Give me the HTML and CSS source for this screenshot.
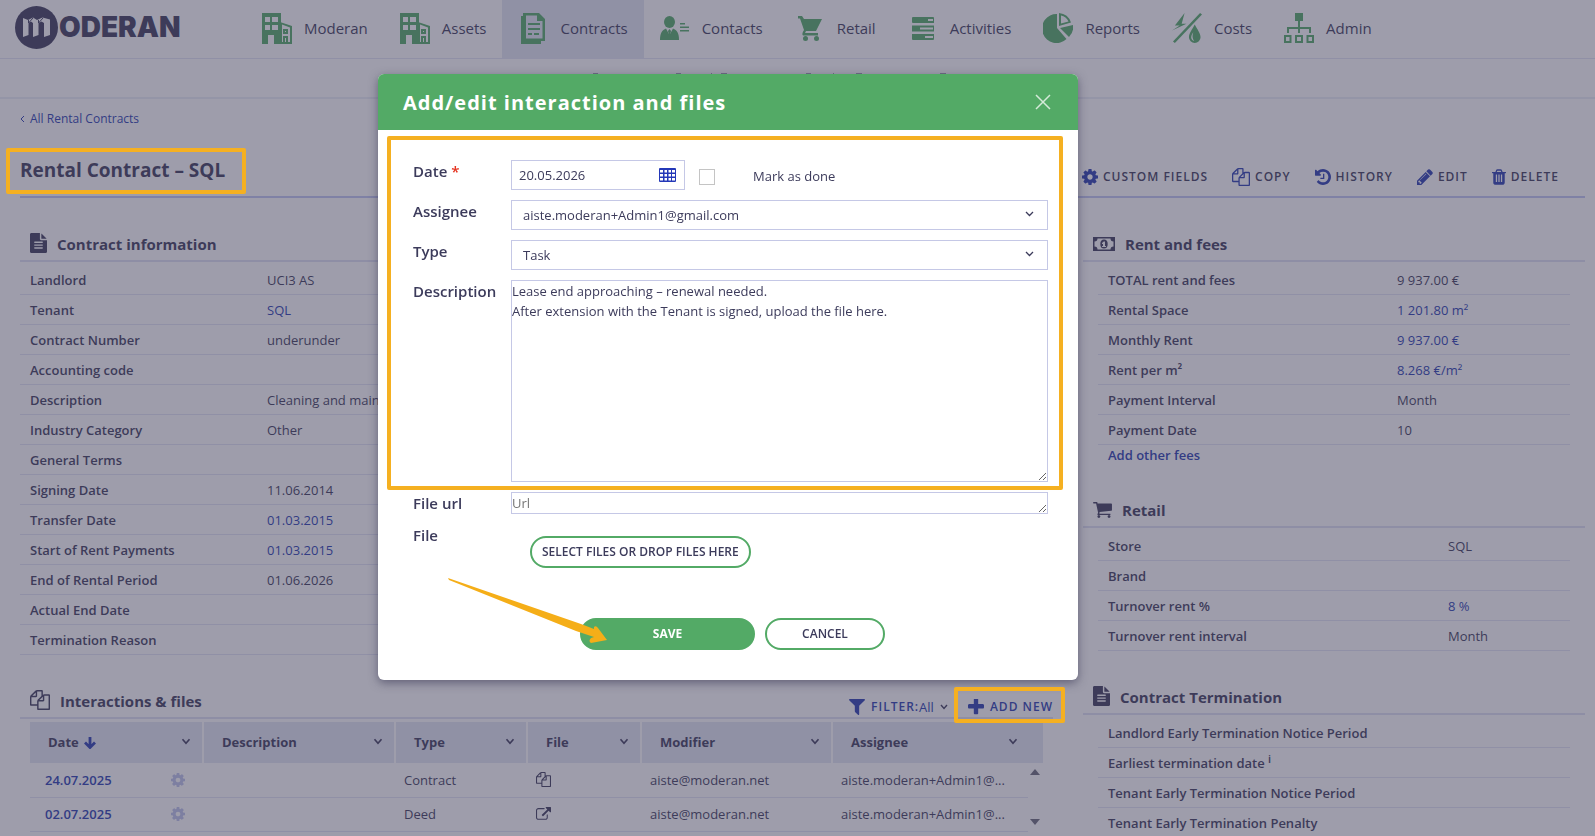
FILE: index.html
```html
<!DOCTYPE html>
<html lang="en">
<head>
<meta charset="utf-8">
<title>Rental Contract – SQL</title>
<link rel="stylesheet" href="styles.css">
</head>
<body>
<svg class="defs" aria-hidden="true">
  <symbol id="i-building" viewBox="0 0 30 31"><path fill-rule="evenodd" d="M0 0H19V31H12V22H6V31H0ZM3 4V9H8V4ZM10 4V9H16V4ZM3 12V17H8V12ZM10 12V17H16V12Z"/><path fill-rule="evenodd" d="M18 9L30 13V31H18ZM20 11.500V29H28V14.500Z"/><path fill-rule="evenodd" d="M21 16h5v5h-5zM23 18v1h1v-1zM21 23h5v6h-5zM23 25v4h1v-4z"/></symbol>
  <symbol id="i-doc" viewBox="0 0 24 31"><path d="M0 3H2V29H19V31H0Z"/><path fill-rule="evenodd" d="M2 0H18L24 6V28H2ZM5 2.500V25.500H21.500V8H16V2.500Z"/><path d="M7 10H19V12H7ZM7 15H19V17H7ZM7 20H11V22H7ZM13 20H18V22H13ZM0 27H20V31H0Z"/></symbol>
  <symbol id="i-contact" viewBox="0 0 30 24"><ellipse cx="9.500" cy="6" rx="5.500" ry="6"/><path d="M0 24C0 17 2 14 6 12.500L9.500 19L13 12.500C17 14 19 17 19 24Z"/><path d="M9.500 13l1.500 2-1 4h-1l-1-4zM20 7h5v1.500h-5zM20 10.500h9v1.500h-9zM20 14h9v1.500h-9z"/></symbol>
  <symbol id="i-cart" viewBox="0 0 24 25"><path d="M0 0H4L6 3H24L18 15H8L7 17H20V19.500H5C4 19 4 17 6 14L2 2.500H0Z"/><circle cx="7.500" cy="22.500" r="2.500"/><circle cx="18.500" cy="22.500" r="2.500"/></symbol>
  <symbol id="i-bars" viewBox="0 0 22 23"><path fill-rule="evenodd" d="M1 0H21Q22 0 22 1V6H1Q0 6 0 5V1Q0 0 1 0ZM16 2V4H21V2ZM0 8.500H22V14.500H0ZM8 10.500V12.500H21V10.500ZM0 17H22V22Q22 23 21 23H1Q0 23 0 22ZM13 19V21H21V19Z"/></symbol>
  <symbol id="i-pie" viewBox="0 0 30 30"><path d="M14 1V15L23.500 26A14.500 14.500 0 1 1 14 1Z"/><path fill-rule="evenodd" d="M16 0A14 14 0 0 1 28 9.500L16 13ZM18 2.500V10.500L25.500 8.500A11 11 0 0 0 18 2.500Z"/><path d="M17 15L30 12A14 14 0 0 1 26 24Z"/></symbol>
  <symbol id="i-costs" viewBox="0 0 31 31"><path d="M13 0L3 13H8L0 18L15 11H10Z"/><path d="M29 0L31 1.500L3 31L1 29.500Z"/><path fill-rule="evenodd" d="M23.500 12C26 17 29.500 21 29.500 25A6 6 0 0 1 17.500 25C17.500 21 21 17 23.500 12ZM22 20C19 24 19 28 23 29Q20 26 22 20Z"/></symbol>
  <symbol id="i-org" viewBox="0 0 30 30"><path fill-rule="evenodd" d="M11 0h8v8h-8zM14 8h2v6h11v6h-2v-4h-9v4h-2v-4H5v4H3v-6h11zM0 22h7.500v8H0zM2 24v4h3.500v-4zM11 22h8v8h-8zM13 24v4h4v-4zM22.500 22H30v8h-7.500zM24.500 24v4H28v-4z"/></symbol>
  <symbol id="i-plus" viewBox="192 192 1408 1408"><path d="M1600 736v192q0 40-28 68t-68 28h-416v416q0 40-28 68t-68 28h-192q-40 0-68-28t-28-68v-416h-416q-40 0-68-28t-28-68v-192q0-40 28-68t68-28h416v-416q0-40 28-68t68-28h192q40 0 68 28t28 68v416h416q40 0 68 28t28 68z"/></symbol>
  <symbol id="i-filter" viewBox="192 256 1408 1408"><path d="M1595 295q17 41-14 70l-493 493v742q0 42-39 59-13 5-25 5-27 0-45-19l-256-256q-19-19-19-45v-486l-493-493q-31-29-14-70 17-39 59-39h1280q42 0 59 39z"/></symbol>
  <symbol id="i-cog" viewBox="128 128 1536 1536"><path d="M1152 896q0-106-75-181t-181-75-181 75-75 181 75 181 181 75 181-75 75-181zm512-109v222q0 12-8 23t-20 13l-185 28q-19 54-39 91 35 50 107 138 10 12 10 25t-9 23q-27 37-99 108t-94 71q-12 0-26-9l-138-108q-44 23-91 38-16 136-29 186-7 28-36 28h-222q-14 0-24.500-8.500t-11.500-21.500l-28-184q-49-16-90-37l-141 107q-10 9-25 9-14 0-25-11-126-114-165-168-7-10-7-23 0-12 8-23 15-21 51-66.500t54-70.500q-27-50-41-99l-183-27q-13-2-21-12.500t-8-23.500v-222q0-12 8-23t19-13l186-28q14-46 39-92-40-57-107-138-10-12-10-24 0-10 9-23 26-36 98.500-107.500t94.500-71.500q13 0 26 10l138 107q44-23 91-38 16-136 29-186 7-28 36-28h222q14 0 24.500 8.500t11.500 21.500l28 184q49 16 90 37l142-107q9-9 24-9 13 0 25 10 129 119 165 170 7 8 7 22 0 12-8 23-15 21-51 66.500t-54 70.500q26 50 41 98l183 28q13 2 21 12.500t8 23.500z"/></symbol>
  <symbol id="i-pencil" viewBox="128 128 1536 1536"><path d="M491 1536l91-91-235-235-91 91v107h128v128h107zm523-928q0-22-22-22-10 0-17 7l-542 542q-7 7-7 17 0 22 22 22 10 0 17-7l542-542q7-7 7-17zm-54-192l416 416-832 832h-416v-416zm683 96q0 53-37 90l-166 166-416-416 166-165q36-38 90-38 53 0 91 38l235 234q37 39 37 91z"/></symbol>
  <symbol id="i-history" viewBox="128 128 1536 1536"><path d="M1664 896q0 156-61 298t-164 245-245 164-298 61q-172 0-327-72.500t-264-204.500q-7-10-6.500-22.500t8.500-20.500l137-138q10-9 25-9 16 2 23 12 73 95 179 147t225 52q104 0 198.500-40.500t163.500-109.500 109.500-163.500 40.500-198.500-40.500-198.500-109.500-163.500-163.500-109.500-198.500-40.500q-98 0-188 35.500t-160 101.500l137 138q31 30 14 69-17 40-59 40h-448q-26 0-45-19t-19-45v-448q0-42 40-59 39-17 69 14l130 129q107-101 244.500-156.500t284.500-55.500q156 0 298 61t245 164 164 245 61 298zm-640-288v448q0 14-9 23t-23 9h-320q-14 0-23-9t-9-23v-64q0-14 9-23t23-9h224v-352q0-14 9-23t23-9h64q14 0 23 9t9 23z"/></symbol>
  <symbol id="i-trash" viewBox="192 128 1408 1536"><path d="M704 1376v-704q0-14-9-23t-23-9h-64q-14 0-23 9t-9 23v704q0 14 9 23t23 9h64q14 0 23-9t9-23zm256 0v-704q0-14-9-23t-23-9h-64q-14 0-23 9t-9 23v704q0 14 9 23t23 9h64q14 0 23-9t9-23zm256 0v-704q0-14-9-23t-23-9h-64q-14 0-23 9t-9 23v704q0 14 9 23t23 9h64q14 0 23-9t9-23zm-544-992h448l-48-117q-7-9-17-11h-317q-10 2-17 11zm928 32v64q0 14-9 23t-23 9h-96v948q0 83-47 143.500t-113 60.500h-832q-66 0-113-58.500t-47-141.500v-952h-96q-14 0-23-9t-9-23v-64q0-14 9-23t23-9h309l70-167q15-37 54-63t79-26h320q40 0 79 26t54 63l70 167h309q14 0 23 9t9 23z"/></symbol>
  <symbol id="i-files" viewBox="0 0 1792 1792"><path d="M1696 384q40 0 68 28t28 68v1216q0 40-28 68t-68 28h-960q-40 0-68-28t-28-68v-288h-544q-40 0-68-28t-28-68v-672q0-40 20-88t48-76l408-408q28-28 76-48t88-20h416q40 0 68 28t28 68v328q68-40 128-40h416zm-544 213l-299 299h299v-299zm-640-384l-299 299h299v-299zm196 647l316-316v-416h-384v416q0 40-28 68t-68 28h-416v640h512v-256q0-40 20-88t48-76zm956 804v-1152h-384v416q0 40-28 68t-68 28h-416v640h896z"/></symbol>
  <symbol id="i-file" viewBox="128 0 1536 1792"><path d="M1596 476q14 14 28 36h-472v-472q22 14 36 28zm-476 164h544v1056q0 40-28 68t-68 28h-1344q-40 0-68-28t-28-68v-1600q0-40 28-68t68-28h800v544q0 40 28 68t68 28zm160 736v-64q0-14-9-23t-23-9h-704q-14 0-23 9t-9 23v64q0 14 9 23t23 9h704q14 0 23-9t9-23zm0-256v-64q0-14-9-23t-23-9h-704q-14 0-23 9t-9 23v64q0 14 9 23t23 9h704q14 0 23-9t9-23zm0-256v-64q0-14-9-23t-23-9h-704q-14 0-23 9t-9 23v64q0 14 9 23t23 9h704q14 0 23-9t9-23z"/></symbol>
  <symbol id="i-trolley" viewBox="64 256 1664 1408"><path d="M704 1536q0 52-38 90t-90 38-90-38-38-90 38-90 90-38 90 38 38 90zm896 0q0 52-38 90t-90 38-90-38-38-90 38-90 90-38 90 38 38 90zm128-1088v512q0 24-16.500 42.500t-40.500 21.500l-1044 122q13 60 13 70 0 16-24 64h920q26 0 45 19t19 45-19 45-45 19h-1024q-26 0-45-19t-19-45q0-11 8-31.500t16-36 21.500-40 15.500-29.500l-177-823h-204q-26 0-45-19t-19-45 19-45 45-19h256q16 0 28.500 6.500t19.500 15.500 13 24.500 8 26 5.500 29.500 4.500 26h1201q26 0 45 19t19 45z"/></symbol>
  <symbol id="i-external" viewBox="0 0 1792 1792"><path d="M1408 928v320q0 119-84.500 203.500t-203.500 84.500h-832q-119 0-203.500-84.500t-84.500-203.500v-832q0-119 84.500-203.500t203.500-84.500h704q14 0 23 9t9 23v64q0 14-9 23t-23 9h-704q-66 0-113 47t-47 113v832q0 66 47 113t113 47h832q66 0 113-47t47-113v-320q0-14 9-23t23-9h64q14 0 23 9t9 23zm384-864v512q0 26-19 45t-45 19-45-19l-176-176-652 652q-10 10-23 10t-23-10l-114-114q-10-10-10-23t10-23l652-652-176-176q-19-19-19-45t19-45 45-19h512q26 0 45 19t19 45z"/></symbol>
  <symbol id="i-money" viewBox="0 0 22 14"><path fill-rule="evenodd" d="M0 0H22V14H0ZM4.500 1.500A3 3 0 0 1 1.500 4.500V9.500A3 3 0 0 1 4.500 12.500H17.500A3 3 0 0 1 20.500 9.500V4.500A3 3 0 0 1 17.500 1.500Z"/><path fill-rule="evenodd" d="M11 2.500a3.700 4.500 0 0 1 0 9a3.700 4.500 0 0 1 0-9ZM10.700 4.500L9 6v1h1v2H9v1h4V9h-1V4.500Z"/></symbol>
  <symbol id="i-chev" viewBox="0 0 8 6"><path d="M1 1L4 4.500L7 1" fill="none" stroke="currentColor" stroke-width="1.400"/></symbol>
  <symbol id="i-chev-thin" viewBox="0 0 9 6"><path d="M1 1L4.500 4.500L8 1" fill="none" stroke="currentColor" stroke-width="1.300"/></symbol>
  <symbol id="i-down" viewBox="0 0 12 12"><path d="M6 0V10M1 5.500L6 10.500L11 5.500" fill="none" stroke="currentColor" stroke-width="2.800"/></symbol>
  <symbol id="i-grid" viewBox="0 0 17 14"><path fill-rule="evenodd" d="M1 0H16Q17 0 17 1V13Q17 14 16 14H1Q0 14 0 13V1Q0 0 1 0ZM1 2V4.500H4V2ZM5.500 2V4.500H8V2ZM9.500 2V4.500H12V2ZM13 2V4.500H16V2ZM1 6V8.500H4V6ZM5.500 6V8.500H8V6ZM9.500 6V8.500H12V6ZM13 6V8.500H16V6ZM1 10V12.500H4V10ZM5.500 10V12.500H8V10ZM9.500 10V12.500H12V10ZM13 10V12.500H16V10Z"/></symbol>
</svg>

<header class="topbar">
  <a class="logo" href="#" aria-label="Moderan">
    <svg class="logo-mark" viewBox="0 0 43 43"><circle cx="21.500" cy="21.500" r="21.500" fill="#3c3b5b"/><path d="M8 12L13 14L18 11.500L22 14L27.500 11.500L35 13.500V29L29 31V17L26.500 15.500L23.500 17V29L18 31V17L16 15.500L13.500 17V29L8 31Z" fill="#fff"/><path d="M13.500 14V17L18 12M23.500 14V17L28 12" fill="none" stroke="#3c3b5b" stroke-width="1"/></svg>
    <span class="logo-text">ODERAN</span>
  </a>
  <nav class="nav">
    <a href="#" class="nav-item"><span class="nav-icon"><svg width="30" height="31"><use href="#i-building"/></svg></span>Moderan</a>
    <a href="#" class="nav-item"><span class="nav-icon"><svg width="30" height="31"><use href="#i-building"/></svg></span>Assets</a>
    <a href="#" class="nav-item active"><span class="nav-icon"><svg width="24" height="31"><use href="#i-doc"/></svg></span>Contracts</a>
    <a href="#" class="nav-item"><span class="nav-icon"><svg width="30" height="24"><use href="#i-contact"/></svg></span>Contacts</a>
    <a href="#" class="nav-item"><span class="nav-icon"><svg width="24" height="25"><use href="#i-cart"/></svg></span>Retail</a>
    <a href="#" class="nav-item"><span class="nav-icon"><svg width="22" height="23"><use href="#i-bars"/></svg></span>Activities</a>
    <a href="#" class="nav-item"><span class="nav-icon"><svg width="30" height="30"><use href="#i-pie"/></svg></span>Reports</a>
    <a href="#" class="nav-item"><span class="nav-icon"><svg width="30" height="30"><use href="#i-costs"/></svg></span>Costs</a>
    <a href="#" class="nav-item"><span class="nav-icon"><svg width="30" height="30"><use href="#i-org"/></svg></span>Admin</a>
  </nav>
</header>
<div class="subbar"><svg width="356" height="2" viewBox="0 0 356 2"><path d="M1 1h5M84 1h5M119 1h1M129 1h6M214 1h5M241 1h1M264 1h6M348 1h6" stroke="#3c3b5b"/></svg></div>

<main class="page">
  <a class="back" href="#"><svg width="5" height="8" viewBox="0 0 5 8"><path d="M4 1L1 4L4 7" fill="none" stroke="currentColor" stroke-width="1"/></svg>All Rental Contracts</a>
  <div class="titlebar">
    <h1>Rental Contract – SQL</h1>
    <div class="actions">
      <button><svg width="16" height="16"><use href="#i-cog"/></svg>CUSTOM FIELDS</button>
      <button><svg width="18" height="18"><use href="#i-files"/></svg>COPY</button>
      <button><svg width="16" height="16"><use href="#i-history"/></svg>HISTORY</button>
      <button><svg width="16" height="16"><use href="#i-pencil"/></svg>EDIT</button>
      <button><svg width="14" height="16"><use href="#i-trash"/></svg>DELETE</button>
    </div>
  </div>

  <div class="columns">
    <div class="col">
      <section class="contract">
        <h2><svg width="17" height="20"><use href="#i-file"/></svg>Contract information</h2>
        <dl class="facts">
          <div><dt>Landlord</dt><dd>UCI3 AS</dd></div>
          <div><dt>Tenant</dt><dd><a href="#">SQL</a></dd></div>
          <div><dt>Contract Number</dt><dd>underunder</dd></div>
          <div><dt>Accounting code</dt><dd></dd></div>
          <div><dt>Description</dt><dd>Cleaning and maintenance</dd></div>
          <div><dt>Industry Category</dt><dd>Other</dd></div>
          <div><dt>General Terms</dt><dd></dd></div>
          <div><dt>Signing Date</dt><dd>11.06.2014</dd></div>
          <div><dt>Transfer Date</dt><dd><a href="#">01.03.2015</a></dd></div>
          <div><dt>Start of Rent Payments</dt><dd><a href="#">01.03.2015</a></dd></div>
          <div><dt>End of Rental Period</dt><dd>01.06.2026</dd></div>
          <div><dt>Actual End Date</dt><dd></dd></div>
          <div><dt>Termination Reason</dt><dd></dd></div>
        </dl>
      </section>

      <section class="interactions">
        <div class="section-head">
          <h2><svg width="20" height="20"><use href="#i-files"/></svg>Interactions &amp; files</h2>
          <div class="tools">
            <button class="filter"><svg width="16" height="16"><use href="#i-filter"/></svg><span>FILTER:</span><span class="all">All</span><svg class="chev" width="8" height="6"><use href="#i-chev"/></svg></button>
            <button class="add"><svg width="16" height="16"><use href="#i-plus"/></svg>ADD NEW</button>
          </div>
        </div>
        <table class="grid">
          <colgroup><col class="c-date"><col class="c-desc"><col class="c-type"><col class="c-file"><col class="c-mod"><col><col class="c-scroll"></colgroup>
          <thead>
            <tr>
              <th><div>Date <svg class="sort" width="12" height="12"><use href="#i-down"/></svg><svg class="chev" width="10" height="7"><use href="#i-chev"/></svg></div></th>
              <th><div>Description<svg class="chev" width="10" height="7"><use href="#i-chev"/></svg></div></th>
              <th><div>Type<svg class="chev" width="10" height="7"><use href="#i-chev"/></svg></div></th>
              <th><div>File<svg class="chev" width="10" height="7"><use href="#i-chev"/></svg></div></th>
              <th><div>Modifier<svg class="chev" width="10" height="7"><use href="#i-chev"/></svg></div></th>
              <th class="last" colspan="2"><div>Assignee<svg class="chev" width="10" height="7"><use href="#i-chev"/></svg></div></th>
            </tr>
          </thead>
          <tbody>
            <tr>
              <td class="date"><div><a href="#">24.07.2025</a><svg width="14" height="14"><use href="#i-cog"/></svg></div></td>
              <td></td><td>Contract</td>
              <td><svg width="15" height="15"><use href="#i-files"/></svg></td>
              <td>aiste@moderan.net</td><td>aiste.moderan+Admin1@...</td>
              <td class="scroll" rowspan="2"><div><svg width="10" height="6" viewBox="0 0 10 6"><path d="M0 6L5 0L10 6Z"/></svg><svg width="10" height="6" viewBox="0 0 10 6"><path d="M0 0L5 6L10 0Z"/></svg></div></td>
            </tr>
            <tr>
              <td class="date"><div><a href="#">02.07.2025</a><svg width="14" height="14"><use href="#i-cog"/></svg></div></td>
              <td></td><td>Deed</td>
              <td><svg width="15" height="15"><use href="#i-external"/></svg></td>
              <td>aiste@moderan.net</td><td>aiste.moderan+Admin1@...</td>
            </tr>
          </tbody>
        </table>
      </section>
    </div>

    <div class="col side">
      <section>
        <h2><svg width="22" height="14"><use href="#i-money"/></svg>Rent and fees</h2>
        <dl class="facts rent">
          <div><dt>TOTAL rent and fees</dt><dd>9 937.00 €</dd></div>
          <div><dt>Rental Space</dt><dd><a href="#">1 201.80 m²</a></dd></div>
          <div><dt>Monthly Rent</dt><dd><a href="#">9 937.00 €</a></dd></div>
          <div><dt>Rent per m²</dt><dd><a href="#">8.268 €/m²</a></dd></div>
          <div><dt>Payment Interval</dt><dd>Month</dd></div>
          <div><dt>Payment Date</dt><dd>10</dd></div>
        </dl>
        <a class="more" href="#">Add other fees</a>
      </section>
      <section class="retail">
        <h2><svg width="19" height="16"><use href="#i-trolley"/></svg>Retail</h2>
        <dl class="facts">
          <div><dt>Store</dt><dd>SQL</dd></div>
          <div><dt>Brand</dt><dd></dd></div>
          <div><dt>Turnover rent %</dt><dd><a href="#">8 %</a></dd></div>
          <div><dt>Turnover rent interval</dt><dd>Month</dd></div>
        </dl>
      </section>
      <section class="termination">
        <h2><svg width="17" height="20"><use href="#i-file"/></svg>Contract Termination</h2>
        <dl class="facts">
          <div><dt>Landlord Early Termination Notice Period</dt></div>
          <div><dt>Earliest termination date <sup>i</sup></dt></div>
          <div><dt>Tenant Early Termination Notice Period</dt></div>
          <div><dt>Tenant Early Termination Penalty</dt></div>
        </dl>
      </section>
    </div>
  </div>
</main>

<div class="backdrop">
  <form class="modal" role="dialog" aria-labelledby="dlg-title">
    <div class="modal-head">
      <h2 id="dlg-title">Add/edit interaction and files</h2>
      <button type="button" aria-label="Close"><svg width="16" height="16" viewBox="0 0 16 16"><path d="M1 1L15 15M15 1L1 15" stroke="#fff" stroke-opacity=".75" stroke-width="1.500"/></svg></button>
    </div>
    <div class="modal-body">
      <div class="field">
        <label for="f-date">Date <span class="req">*</span></label>
        <div class="date-row">
          <div class="date-box"><input id="f-date" type="text" value="20.05.2026"><svg width="17" height="14"><use href="#i-grid"/></svg></div>
          <input id="f-done" class="tick" type="checkbox"><label for="f-done" class="plain">Mark as done</label>
        </div>
      </div>
      <div class="field">
        <label for="f-assignee">Assignee</label>
        <div class="pick"><select id="f-assignee"><option>aiste.moderan+Admin1@gmail.com</option></select><svg width="9" height="6"><use href="#i-chev-thin"/></svg></div>
      </div>
      <div class="field">
        <label for="f-type">Type</label>
        <div class="pick"><select id="f-type"><option>Task</option></select><svg width="9" height="6"><use href="#i-chev-thin"/></svg></div>
      </div>
      <div class="field">
        <label for="f-desc">Description</label>
        <textarea id="f-desc" class="desc">Lease end approaching – renewal needed.
After extension with the Tenant is signed, upload the file here.</textarea>
      </div>
      <div class="field">
        <label for="f-url">File url</label>
        <textarea id="f-url" class="url" placeholder="Url"></textarea>
      </div>
      <div class="field">
        <span class="lbl">File</span>
        <div class="file"><button type="button" class="btn">SELECT FILES OR DROP FILES HERE</button></div>
      </div>
      <div class="buttons">
        <button type="button" class="btn save">SAVE</button>
        <button type="button" class="btn cancel">CANCEL</button>
      </div>
    </div>
  </form>
</div>

<div class="mark mark-title"></div>
<div class="mark mark-form"></div>
<div class="mark mark-add"></div>
<svg class="arrow" width="162" height="68" viewBox="0 0 162 68"><path d="M0 0L133 46L146 51L146 49Q148 47 150 50L159 62L143 65Q140 63 143 60L146 59L128 53L1 2Z" fill="#f5ae18"/></svg>
</body>
</html>
```
FILE: styles.css
```css
* { box-sizing: border-box; }
body {
  margin: 0;
  height: 100vh;
  overflow: hidden;
  background: #fff;
  color: #3c3b5b;
  font: 13px/20px "Open Sans", "Noto Sans", sans-serif;
}
.defs { display: none; }
svg { fill: currentColor; flex: none; display: block; }
h1, h2, dl, dd { margin: 0; }
a { color: #283db0; text-decoration: none; }
button { font: inherit; color: inherit; background: none; border: 0; padding: 0; cursor: pointer; }

/* Top navigation */
.topbar { display: flex; height: 59px; border-bottom: 1px solid #e3e5f5; }
.logo { display: flex; align-items: center; gap: 1px; width: 246px; padding: 0 0 4px 15px; color: #3c3b5b; }
.logo-mark { width: 43px; height: 43px; }
.logo-text { font: 900 28px/30px Inter, sans-serif; }
.nav { display: flex; }
.nav-item { display: flex; align-items: center; gap: 12px; padding: 0 16px 2px; color: #3c3b5b; font-size: 15px; font-weight: 500; }
.nav-item.active { background: #e3e6f3; }
.nav-icon { display: flex; justify-content: center; width: 30px; color: #53aa66; }
.subbar { display: flex; justify-content: center; height: 40px; padding: 14px 0 0 0; border-bottom: 2px solid #ebeef7; }
.subbar svg { margin-left: -56px; }

/* Page heading */
.page { padding: 10px 10px 0 20px; }
.back { display: flex; align-items: center; gap: 5px; height: 20px; font-size: 12px; }
.titlebar { display: flex; justify-content: space-between; height: 69px; border-bottom: 2px solid #c1c7f3; padding-top: 27px; }
h1 { font-size: 19px; line-height: 28px; }
.actions { display: flex; gap: 24px; height: 42px; padding-right: 26px; }
.actions button { display: flex; align-items: center; gap: 5px; font-size: 12px; font-weight: 600; letter-spacing: 1px; }
.actions svg { color: #283db0; }

/* Sections */
.columns { display: grid; grid-template-columns: 1033fr 502fr; gap: 30px; padding-top: 28px; }
.col { min-width: 0; }
h2 { display: flex; align-items: center; gap: 10px; height: 36px; padding: 2px 10px 0; font-size: 15px; line-height: 20px; font-weight: 700; }
section > h2, .section-head { border-bottom: 2px solid #dfe1f3; }
.contract { width: 50%; }
.contract > h2 svg, .termination > h2 svg, .interactions h2 svg { margin-bottom: 3px; }
.facts { padding-top: 3px; }
.facts > div { display: grid; grid-template-columns: 237px 1fr; height: 30px; align-items: center; padding-left: 10px; border-bottom: 1px solid #e3e5f5; }
.facts dt { font-weight: 600; white-space: nowrap; }
.facts dd { white-space: nowrap; overflow: hidden; }
.side .facts { padding: 3px 15px 0; }
.side .facts > div { grid-template-columns: 340px 1fr; }
.side .facts.rent > div { grid-template-columns: 289px 1fr; }
.more { display: block; padding-left: 25px; font-weight: 600; }
.retail { margin-top: 27px; }
.termination { margin-top: 28px; }
sup { font-size: 11px; line-height: 0; }

/* Interactions table */
.interactions { margin-top: 27px; }
.section-head { display: flex; justify-content: space-between; height: 37px; }
.tools { display: flex; align-items: center; gap: 20px; padding-top: 14px; color: #283db0; }
.tools button { display: flex; align-items: center; gap: 6px; font-size: 12px; font-weight: 600; letter-spacing: 1px; }
.tools .all { font-size: 13px; font-weight: 400; letter-spacing: 0; margin-left: -6px; }
.tools .filter .chev { color: #3c3b5b; }
.grid { width: calc(100% - 20px); margin: 3px 10px 0; table-layout: fixed; border-collapse: collapse; }
.c-date { width: 173px; }
.c-desc { width: 192px; }
.c-type { width: 132px; }
.c-file { width: 114px; }
.c-mod { width: 191px; }
.c-scroll { width: 15px; }
.grid th { height: 41px; padding: 0 11px 2px 18px; background: #e3e6f3; border-right: 2px solid #fff; text-align: left; font-weight: 700; }
.grid th.last { border-right: 0; padding-right: 25px; }
.grid th div { display: flex; align-items: center; gap: 5px; }
.grid th .chev { margin-left: auto; }
.grid .sort { color: #283db0; margin-top: 2px; }
.grid td { height: 34px; padding: 0 9px; border-bottom: 1px solid #e3e5f5; white-space: nowrap; overflow: hidden; }
.grid td.date { padding: 0 18px 0 15px; font-weight: 600; }
.grid td.date div { display: flex; align-items: center; justify-content: space-between; }
.grid td.date svg { color: #bcc2ea; }
.grid td.scroll { padding: 6px 2px; border: 0; color: #6b6b7b; }
.scroll div { display: flex; flex-direction: column; justify-content: space-between; height: 56px; }

/* Dialog */
.backdrop { position: fixed; inset: 0; padding: 74px 0 0 378px; background: rgba(61, 59, 87, .5); }
.modal { width: 700px; background: #fff; border-radius: 6px; box-shadow: 0 3px 10px rgba(40, 38, 70, .5); overflow: hidden; }
.modal-head { display: flex; align-items: center; justify-content: space-between; height: 56px; padding: 0 27px 0 25px; background: #53aa66; color: #fff; }
.modal-head h2 { padding: 2px 0 0; font-size: 20px; letter-spacing: 1px; }
.modal-body { display: flex; flex-direction: column; gap: 10px; padding: 30px 30px; height: 550px; }
.field { display: grid; grid-template-columns: 98px 1fr; padding-left: 5px; align-items: start; }
.field > label, .lbl { font-size: 15px; font-weight: 600; line-height: 22px; }
.req { color: #e5311d; }
.date-row { display: flex; align-items: center; }
.date-box { display: flex; align-items: center; width: 174px; height: 30px; padding: 0 8px 0 7px; border: 1px solid #c5c8e6; }
.date-box input { flex: 1; min-width: 0; border: 0; padding: 0; outline: 0; font: inherit; color: inherit; }
.date-box svg { color: #2438b8; }
.tick { appearance: none; width: 16px; height: 16px; margin: 3px 38px 0 14px; border: 1px solid #c4c4c4; background: #fff; }
.plain { padding-top: 2px; }
.pick { display: flex; align-items: center; height: 30px; border: 1px solid #c5c8e6; padding-right: 13px; }
.pick select { flex: 1; appearance: none; border: 0; outline: 0; background: none; padding: 0 11px; font: inherit; color: inherit; }
.pick svg { margin-bottom: 3px; }
textarea { display: block; width: 100%; margin: 0; border: 1px solid #c5c8e6; padding: 0; font: inherit; color: inherit; outline: 0; }
.desc { height: 202px; }
.url { height: 22px; overflow: hidden; }
.file { padding: 12px 0 0 19px; }
.btn { height: 32px; padding: 0 10px; border: 2px solid #53aa66; border-radius: 16px; background: #fff; font-size: 12px; font-weight: 600; }
.buttons { display: flex; gap: 10px; padding: 40px 0 0 172px; }
.btn.save { width: 175px; background: #53aa66; color: #fff; font-weight: 700; }
.btn.cancel { width: 120px; }

/* Callouts drawn over the screen */
.mark { position: absolute; border: 4px solid #f5b021; border-radius: 2px; pointer-events: none; }
.mark-title { left: 6px; top: 148px; width: 240px; height: 46px; }
.mark-form { left: 387px; top: 136px; width: 676px; height: 354px; }
.mark-add { left: 954px; top: 687px; width: 111px; height: 36px; }
.arrow { position: absolute; left: 448px; top: 578px; pointer-events: none; }
```
